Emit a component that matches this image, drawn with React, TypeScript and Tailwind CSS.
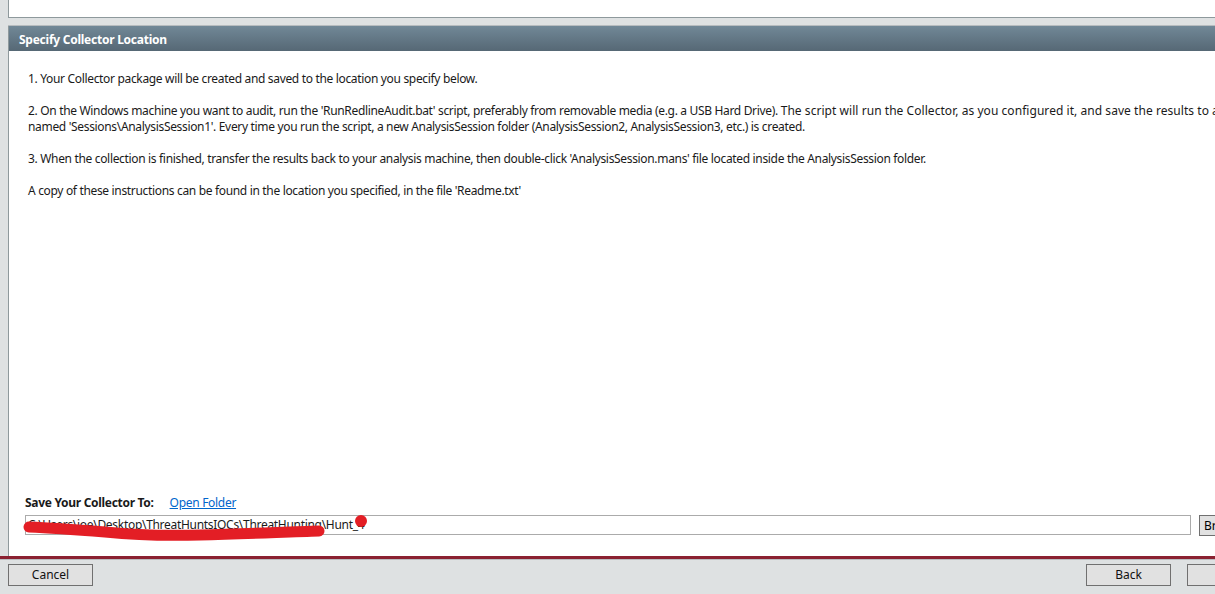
import React from "react";

const font = { fontFamily: '"Noto Sans", "Open Sans", sans-serif' };

function Btn({ label, className = "" }: { label: string; className?: string }) {
  return (
    <div
      className={
        "h-[22px] w-[85px] shrink-0 border border-[#707070] bg-[#e1e1e1] flex items-center justify-center text-[12px] text-[#111] " +
        className
      }
    >
      {label}
    </div>
  );
}

export default function App() {
  return (
    <div
      className="w-[1215px] h-[594px] bg-[#dee1e2] overflow-hidden flex flex-col"
      style={font}
    >
      {/* top panel remnant */}
      <div className="ml-[8px] h-[18px] bg-white border-l border-b border-[#8e999c] shrink-0" />
      <div className="h-[7px] shrink-0" />
      <div className="h-[1px] bg-[#b7bcbf] ml-[8px] shrink-0" />

      {/* main panel */}
      <div className="ml-[8px] flex-1 flex flex-col border-l border-[#8e999c] min-h-0">
        <div className="h-[25px] shrink-0 bg-gradient-to-b from-[#718897] to-[#566875] flex items-center pl-[10px] pt-[2px]">
          <span className="text-white font-bold text-[12px] tracking-[-0.25px]">
            Specify Collector Location
          </span>
        </div>

        <div className="flex-1 bg-white flex flex-col min-h-0">
          <div className="pl-[19px] pt-[20px] text-[12px] leading-[16px] text-[#1a1a1a] whitespace-nowrap flex flex-col gap-[16px] tracking-[-0.33px]">
            <p>1. Your Collector package will be created and saved to the location you specify below.</p>
            <p>
              2. On the Windows machine you want to audit, run the 'RunRedlineAudit.bat' script, preferably from removable media (e.g. a USB Hard Drive).{" "}
              <span className="tracking-[0.05px]">
                The script will run the Collector, as you configured it, and save the results to a folder
              </span>
              <br />
              named 'Sessions\AnalysisSession1'. Every time you run the script, a new AnalysisSession folder (AnalysisSession2, AnalysisSession3, etc.) is created.
            </p>
            <p>
              3. When the collection is finished, transfer the results back to your analysis machine, then double-click 'AnalysisSession.mans' file located inside the AnalysisSession folder.
            </p>
            <p>A copy of these instructions can be found in the location you specified, in the file 'Readme.txt'</p>
          </div>

          <div className="flex-1" />

          <div className="pl-[16px] pb-[20px] flex flex-col gap-[4px]">
            <div className="flex items-center gap-[16px] h-[16px] text-[12px]">
              <span className="font-bold text-[#1a1a1a] tracking-[-0.3px]">Save Your Collector To:</span>
              <span className="text-[#0066cc] underline tracking-[-0.3px]">Open Folder</span>
            </div>
            <div className="flex items-start gap-[8px]">
              <div className="relative shrink-0 w-[1166px] h-[20px] border border-[#ababab] bg-white flex items-center pl-[2px] text-[12px] text-[#1a1a1a] whitespace-nowrap tracking-[-0.3px]">
                <span>C:\Users\joe\Desktop\ThreatHuntsIOCs\ThreatHunting\Hunt_4</span>
                <svg
                  className="absolute left-[-1px] top-[-1px] overflow-visible"
                  width="360"
                  height="30"
                  viewBox="0 0 360 30"
                >
                  <path
                    d="M4 12 C 30 13, 55 15, 80 17 C 110 20, 140 21, 175 20 C 220 19, 260 17, 294 16"
                    stroke="#e31e25"
                    strokeWidth="11"
                    strokeLinecap="round"
                    fill="none"
                  />
                  <circle cx="336" cy="6" r="6" fill="#e31e25" />
                </svg>
              </div>
              <div className="shrink-0 w-[40px] h-[21px] border border-[#707070] bg-[#e1e1e1] text-[12px] flex items-center pl-[4px] overflow-hidden">
                Browse
              </div>
            </div>
          </div>
        </div>
      </div>

      <div className="h-[3px] bg-[#8b2131] shrink-0" />
      <div className="h-[1px] bg-[#b9bcbf] shrink-0" />

      <div className="h-[34px] shrink-0 flex items-start pt-[4px] pl-[8px]">
        <Btn label="Cancel" />
        <div className="flex-1" />
        <Btn label="Back" />
        <Btn label="Next" className="ml-[16px] mr-[-57px]" />
      </div>
    </div>
  );
}
